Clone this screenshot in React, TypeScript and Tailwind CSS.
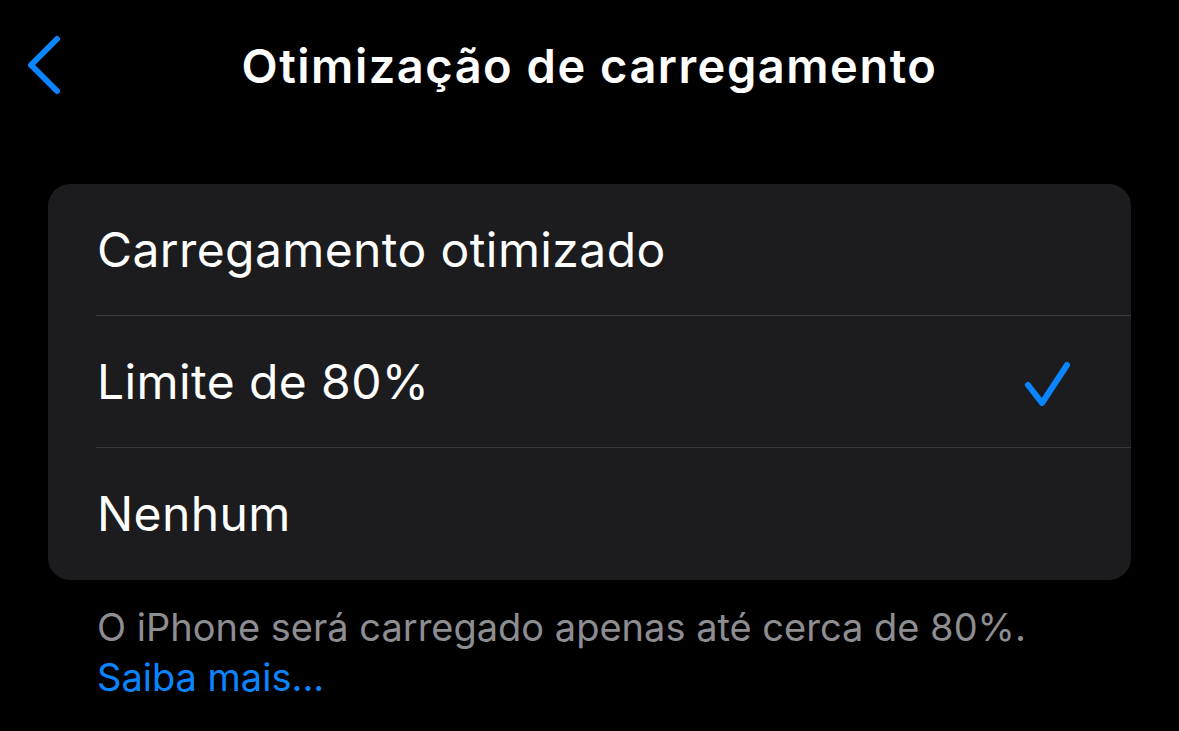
import React from "react";

const rows = [
    { label: "Carregamento otimizado", checked: false },
    { label: "Limite de 80%", checked: true },
    { label: "Nenhum", checked: false },
];

export default function App() {
    return (
        <main className="w-[1179px] h-[731px] bg-black text-white overflow-hidden" style={{ fontFamily: "Inter, 'Noto Sans', sans-serif" }}>
            <header className="relative h-[132px] flex items-center justify-center">
                <button className="absolute left-[21px] top-[30px] p-1">
                    <svg width="40" height="62" viewBox="0 0 40 62" fill="none">
                        <path d="M32 5 L6 31 L32 57" stroke="#0a84ff" strokeWidth="6" strokeLinecap="round" strokeLinejoin="round" />
                    </svg>
                </button>
                <h1 className="text-[47px] font-semibold tracking-[1.5px]">Otimização de carregamento</h1>
            </header>

            <div className="mx-[48px] mt-[52px] bg-[#1c1c1e] rounded-[22px] pl-[48px] overflow-hidden">
                {rows.map((row, i) => (
                    <div
                        key={row.label}
                        className={"h-[132px] flex items-center pr-[57px] " + (i < rows.length - 1 ? "border-b border-[#38383a]" : "")}
                    >
                        <span className="text-[48px] pl-[1px] tracking-[0.4px]">{row.label}</span>
                        {row.checked && (
                            <svg className="ml-auto" width="52" height="48" viewBox="0 0 52 48" fill="none">
                                <path d="M6 27 L20 45 L45 7" stroke="#0a84ff" strokeWidth="6" strokeLinecap="round" strokeLinejoin="round" />
                            </svg>
                        )}
                    </div>
                ))}
            </div>

            <div className="px-[97px] pt-[22px] text-[38px] leading-[50px]">
                <p className="text-[#8d8d92]">O iPhone será carregado apenas até cerca de 80%.</p>
                <p className="text-[#0a84ff]">Saiba mais...</p>
            </div>
        </main>
    );
}
